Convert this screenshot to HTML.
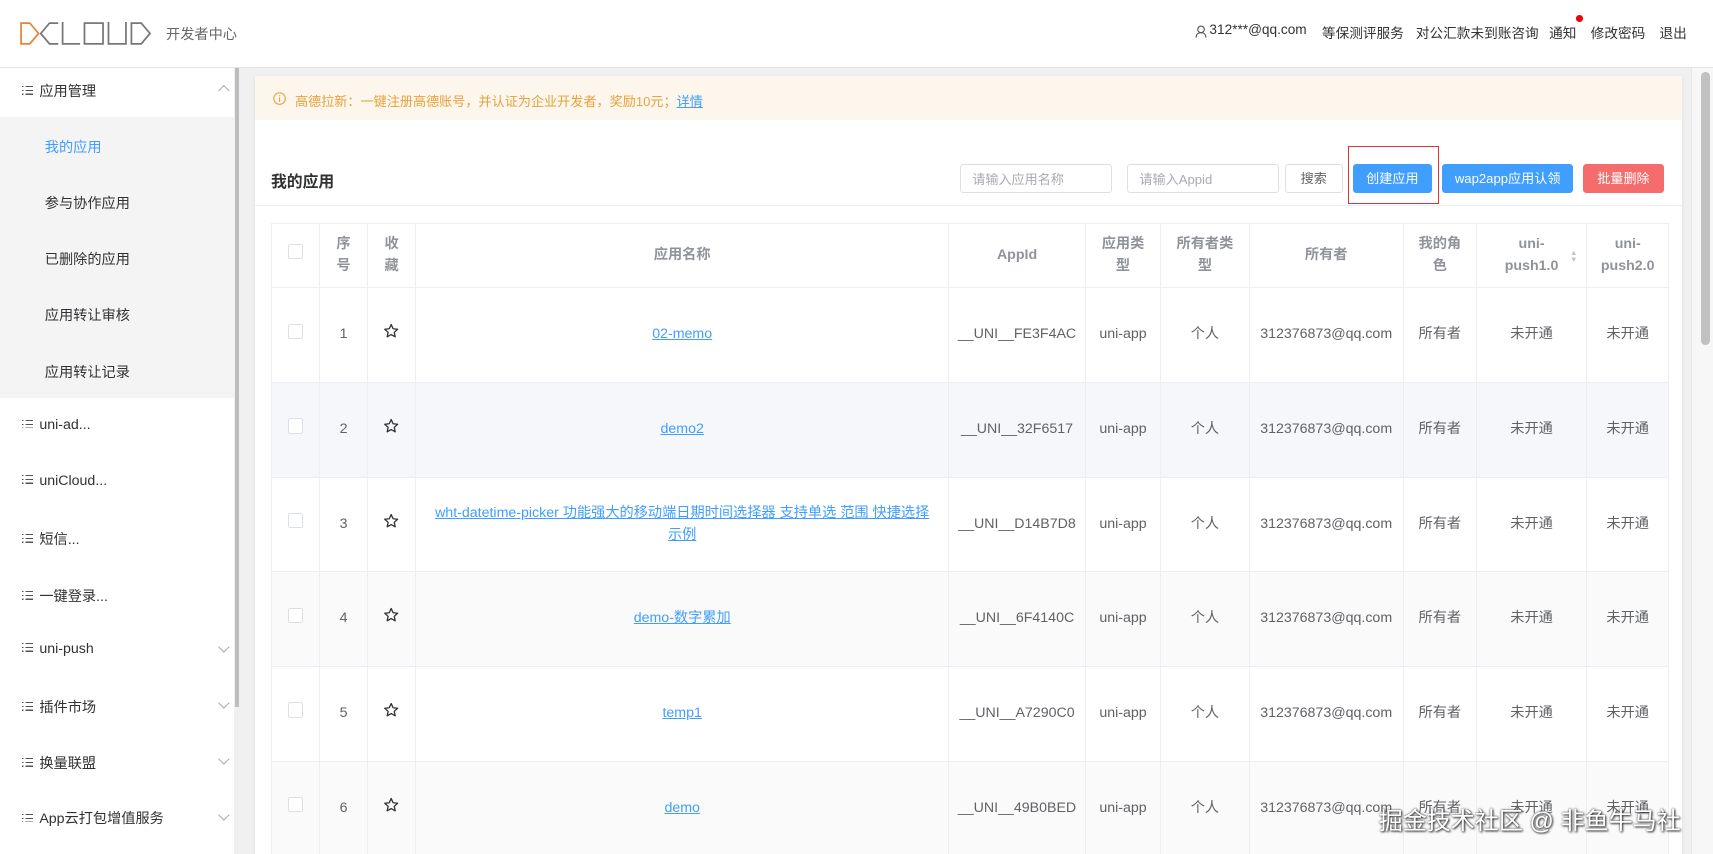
<!DOCTYPE html>
<html><head><meta charset="utf-8">
<style>
*{box-sizing:border-box;margin:0;padding:0}
html,body{width:1713px;height:854px;overflow:hidden;background:#f0f0f0}
#w{zoom:1.0925;width:1568px;height:782px;position:relative;overflow:hidden;font-family:"Liberation Sans","Noto Sans CJK SC",sans-serif;color:#303133;font-size:13px;background:#f0f0f0}
.a{position:absolute;white-space:nowrap}
#hd{left:0;top:0;width:1568px;height:62px;background:#fff;border-bottom:1px solid #e4e4e4}
.nav{top:20px;font-size:12.5px;color:#333}
#sb{left:0;top:62px;width:214px;height:720px;background:#fff}
.mi{left:20px;font-size:13px;color:#303133}
.mi i{display:inline-block;width:10px;height:8px;margin-right:6px;vertical-align:1px;background:linear-gradient(90deg,transparent 0 1.5px,#fff 1.5px 3px,transparent 3px),linear-gradient(#555 0 1px,transparent 1px 3.5px,#555 3.5px 4.5px,transparent 4.5px 7px,#555 7px 8px)}
.si{left:41px;font-size:13px;color:#303133}
.chev{width:7px;height:7px;border-right:1px solid #aaa;border-bottom:1px solid #aaa;transform:rotate(45deg)}
#card{left:233px;top:70px;width:1307px;height:720px;background:#fff;box-shadow:0 1px 4px rgba(0,0,0,.08)}
.inp{height:27px;border:1px solid #dcdfe6;border-radius:3px;background:#fff;font-size:12px;color:#a8abb2;padding:7px 10px;line-height:12px}
.btn{height:27px;border-radius:3px;font-size:12px;color:#fff;text-align:center;line-height:27px}
table{position:absolute;left:248px;top:204px;border-collapse:collapse;table-layout:fixed;background:#fff}
td,th{border:1px solid #ebeef5;text-align:center;vertical-align:middle;font-size:13px;color:#606266;font-weight:normal;padding:0 4px;line-height:20px}
th{color:#909399;height:59px;font-weight:600;font-size:13px}
td{height:86.7px}
td.n{padding:0 12px}
.cb{display:inline-block;width:14px;height:14px;border:1px solid #dcdfe6;border-radius:2px;background:#fff}
a{color:#409eff;text-decoration:underline}
tr.h td{background:#f5f7fa}
tr.s td{background:#fafafa}
</style></head><body><div id="w">
<svg width="0" height="0" style="position:absolute"><defs><symbol id="st" viewBox="0 0 16 16"><path d="M8 1.5L9.9 5.6L14.3 6.1L11 9.1L11.9 13.5L8 11.3L4.1 13.5L5 9.1L1.7 6.1L6.1 5.6Z" fill="none" stroke="#333" stroke-width="1.3" stroke-linejoin="round"/></symbol></defs></svg>
<div id="hd" class="a"></div>
<svg class="a" style="left:18px;top:20px" width="128" height="21" viewBox="0 0 128 21" fill="none" stroke-width="1.6">
<path d="M1 1H9L17 10.5L9 20H1Z" stroke="#e8833a"/>
<path d="M35 1H27L19 10.5L27 20H35" stroke="#777"/>
<path d="M39 0V20H55" stroke="#777"/>
<rect x="59" y="1" width="17" height="19" stroke="#777"/>
<path d="M81 0V20H97V0" stroke="#777"/>
<path d="M102 1H111L119 10.5L111 20H102Z" stroke="#777"/>
</svg>
<div class="a" style="left:152px;top:22px;font-size:13px;color:#666">开发者中心</div>
<svg class="a" style="left:1094px;top:23px" width="11" height="12" viewBox="0 0 11 12" fill="none" stroke="#555"><circle cx="5.5" cy="4" r="3"/><path d="M1 11.5C1 8.5 3 7 5.5 7S10 8.5 10 11.5"/></svg>
<div class="a nav" style="left:1107px">312***@qq.com</div>
<div class="a nav" style="left:1210px">等保测评服务</div>
<div class="a nav" style="left:1296px">对公汇款未到账咨询</div>
<div class="a nav" style="left:1418px">通知</div>
<div class="a" style="left:1443px;top:14px;width:6px;height:6px;border-radius:50%;background:#e00"></div>
<div class="a nav" style="left:1456px">修改密码</div>
<div class="a nav" style="left:1519px">退出</div>

<div id="sb" class="a"></div>
<div class="a" style="left:0;top:107px;width:214px;height:257px;background:#f4f4f5"></div>
<div class="a" style="left:214px;top:62px;width:6px;height:720px;background:#f0f0f0"></div>
<div class="a" style="left:215px;top:62px;width:4px;height:585px;background:#bdbdbd"></div>
<div class="a mi" style="top:74px"><i></i>应用管理</div>
<div class="a chev" style="left:201px;top:80px;transform:rotate(225deg)"></div>
<div class="a si" style="top:125px;color:#409eff">我的应用</div>
<div class="a si" style="top:177px">参与协作应用</div>
<div class="a si" style="top:228px">已删除的应用</div>
<div class="a si" style="top:279px">应用转让审核</div>
<div class="a si" style="top:331px">应用转让记录</div>
<div class="a mi" style="top:382px"><i></i>uni-ad...</div>
<div class="a mi" style="top:433px"><i></i>uniCloud...</div>
<div class="a mi" style="top:484px"><i></i>短信...</div>
<div class="a mi" style="top:536px"><i></i>一键登录...</div>
<div class="a mi" style="top:587px"><i></i>uni-push</div>
<div class="a chev" style="left:201px;top:589px"></div>
<div class="a mi" style="top:638px"><i></i>插件市场</div>
<div class="a chev" style="left:201px;top:640px"></div>
<div class="a mi" style="top:689px"><i></i>换量联盟</div>
<div class="a chev" style="left:201px;top:691px"></div>
<div class="a mi" style="top:740px"><i></i>App云打包增值服务</div>
<div class="a chev" style="left:201px;top:742px"></div>

<div id="card" class="a"></div>
<div class="a" style="left:233px;top:70px;width:1307px;height:40px;background:#fdf6ec"></div>
<svg class="a" style="left:250px;top:84px" width="12" height="12" viewBox="0 0 12 12" fill="none" stroke="#e6a23c"><circle cx="6" cy="6" r="5.3"/><path d="M6 5V9M6 3V4"/></svg>
<div class="a" style="left:270px;top:83px;font-size:12px;color:#e6a23c">高德拉新：一键注册高德账号，并认证为企业开发者，奖励10元；<a style="color:#409eff">详情</a></div>
<div class="a" style="left:248px;top:155px;font-size:14.5px;font-weight:600;color:#303133">我的应用</div>
<div class="a inp" style="left:879px;top:150px;width:139px">请输入应用名称</div>
<div class="a inp" style="left:1032px;top:150px;width:139px">请输入Appid</div>
<div class="a btn" style="left:1176px;top:150px;width:53px;border:1px solid #dcdfe6;color:#606266;line-height:25px;background:#fff">搜索</div>
<div class="a" style="left:1234px;top:134px;width:83px;height:53px;border:1px solid #d33"></div>
<div class="a btn" style="left:1238px;top:150px;width:73px;background:#409eff">创建应用</div>
<div class="a btn" style="left:1320px;top:150px;width:120px;background:#409eff">wap2app应用认领</div>
<div class="a btn" style="left:1449px;top:150px;width:74px;background:#f56c6c">批量删除</div>
<div class="a" style="left:233px;top:188px;width:1307px;height:1px;background:#ebeef5"></div>

<table>
<colgroup><col style="width:44px"><col style="width:44px"><col style="width:44px"><col style="width:488px"><col style="width:125px"><col style="width:69px"><col style="width:81px"><col style="width:141px"><col style="width:67px"><col style="width:101px"><col style="width:75px"></colgroup>
<tr><th><span class="cb"></span></th><th>序<br>号</th><th>收<br>藏</th><th>应用名称</th><th>AppId</th><th>应用类<br>型</th><th>所有者类<br>型</th><th>所有者</th><th>我的角<br>色</th><th style="position:relative">uni-<br>push1.0<span style="position:absolute;right:8px;top:24px;font-size:7px;color:#c0c4cc;line-height:6px">▲<br>▼</span></th><th>uni-<br>push2.0</th></tr>
<tr><td><span class="cb"></span></td><td>1</td><td><svg width="15" height="15"><use href="#st"/></svg></td><td class="n"><a>02-memo</a></td><td>__UNI__FE3F4AC</td><td>uni-app</td><td>个人</td><td>312376873@qq.com</td><td>所有者</td><td>未开通</td><td>未开通</td></tr>
<tr class="h"><td><span class="cb"></span></td><td>2</td><td><svg width="15" height="15"><use href="#st"/></svg></td><td class="n"><a>demo2</a></td><td>__UNI__32F6517</td><td>uni-app</td><td>个人</td><td>312376873@qq.com</td><td>所有者</td><td>未开通</td><td>未开通</td></tr>
<tr><td><span class="cb"></span></td><td>3</td><td><svg width="15" height="15"><use href="#st"/></svg></td><td class="n"><a>wht-datetime-picker 功能强大的移动端日期时间选择器 支持单选 范围 快捷选择示例</a></td><td>__UNI__D14B7D8</td><td>uni-app</td><td>个人</td><td>312376873@qq.com</td><td>所有者</td><td>未开通</td><td>未开通</td></tr>
<tr class="s"><td><span class="cb"></span></td><td>4</td><td><svg width="15" height="15"><use href="#st"/></svg></td><td class="n"><a>demo-数字累加</a></td><td>__UNI__6F4140C</td><td>uni-app</td><td>个人</td><td>312376873@qq.com</td><td>所有者</td><td>未开通</td><td>未开通</td></tr>
<tr><td><span class="cb"></span></td><td>5</td><td><svg width="15" height="15"><use href="#st"/></svg></td><td class="n"><a>temp1</a></td><td>__UNI__A7290C0</td><td>uni-app</td><td>个人</td><td>312376873@qq.com</td><td>所有者</td><td>未开通</td><td>未开通</td></tr>
<tr class="s"><td><span class="cb"></span></td><td>6</td><td><svg width="15" height="15"><use href="#st"/></svg></td><td class="n"><a>demo</a></td><td>__UNI__49B0BED</td><td>uni-app</td><td>个人</td><td>312376873@qq.com</td><td>所有者</td><td>未开通</td><td>未开通</td></tr>
</table>

<div class="a" style="left:1548px;top:62px;width:20px;height:720px;background:#f7f7f7;border-left:1px solid #e6e6e6"></div>
<div class="a" style="left:1557px;top:66px;width:8px;height:250px;border-radius:4px;background:#c1c1c1"></div>
<div class="a" style="left:1262px;top:733px;font-size:22px;color:#fff;text-shadow:0 0 2px #333,1px 1px 2px #333">掘金技术社区 @ 非鱼牛马社</div>
</div></body></html>
